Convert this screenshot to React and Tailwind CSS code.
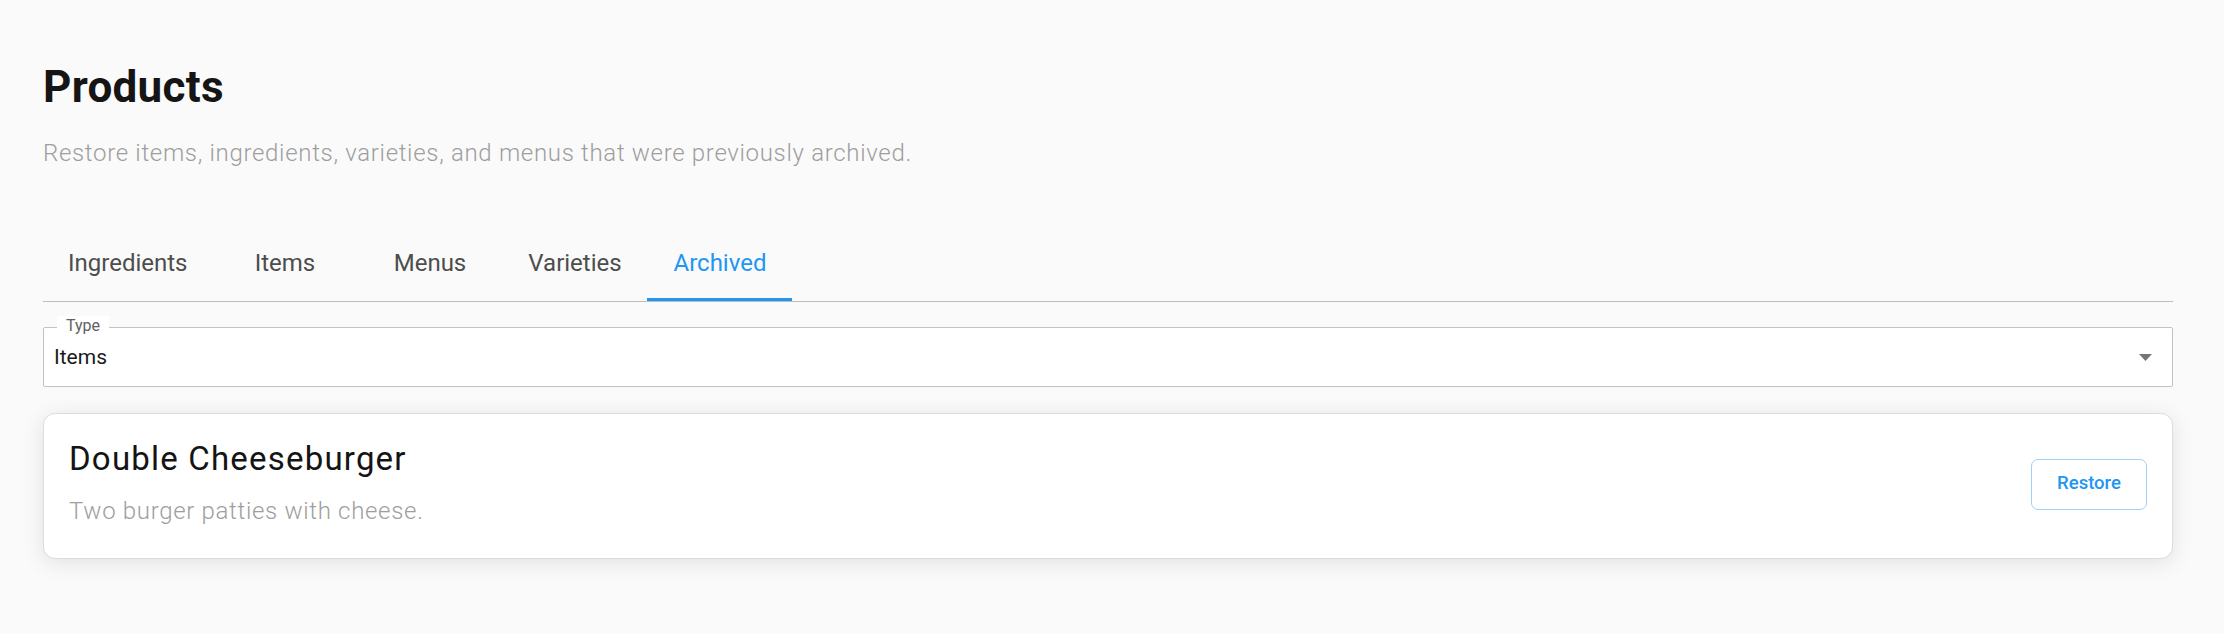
export default function App() {
  const tabs = [
    { label: "Ingredients", active: false },
    { label: "Items", active: false },
    { label: "Menus", active: false },
    { label: "Varieties", active: false },
    { label: "Archived", active: true },
  ];
  return (
    <div
      className="min-h-[634px] w-full bg-[#fafafa] pl-[43px] pr-[51px] pt-[61px]"
      style={{ fontFamily: "Roboto, 'Liberation Sans', sans-serif" }}
    >
      <h1 className="text-[44px] leading-[52px] font-bold tracking-[0.3px] text-[#151515]">Products</h1>
      <p className="mt-[22px] text-[24px] leading-[36px] font-light tracking-[0.68px] text-[#9e9e9e]">
        Restore items, ingredients, varieties, and menus that were previously archived.
      </p>

      <div className="mt-[58px] flex h-[73px] border-b border-[#bdbdbd]">
        {tabs.map((t) => (
          <div
            key={t.label}
            className={
              "relative flex min-w-[145px] items-center justify-center px-[25px] text-[24px] leading-[30px] " +
              (t.active ? "text-[#2196f3]" : "text-[#4d4d4d]")
            }
          >
            <span className="-mt-[4px]">{t.label}</span>
            {t.active && (
              <span className="absolute bottom-0 left-0 right-0 h-[3px] bg-[#2196f3]" />
            )}
          </div>
        ))}
      </div>

      <div className="relative mt-[25px] flex h-[60px] items-center justify-between rounded-[2px] border-[1.5px] border-[#c2c2c2] bg-white pl-[10px] pr-[20px]">
        <span className="absolute -top-[12px] left-[13px] bg-white px-[9px] text-[16px] leading-[20px] text-[#616161]">
          Type
        </span>
        <span className="text-[21px] leading-[28px] text-[#1a1a1a]">Items</span>
        <svg width="13" height="7" viewBox="0 0 13 7" className="mt-[1px]">
          <path d="M0 0 L13 0 L6.5 7 Z" fill="#757575" />
        </svg>
      </div>

      <div className="mt-[26px] flex items-center justify-between rounded-[12px] border border-[#dcdcdc] bg-white pb-[29px] pl-[25px] pr-[25px] pt-[25px] shadow-[0_4px_22px_rgba(0,0,0,0.10)]">
        <div className="flex flex-col">
          <h2 className="text-[33px] leading-[40px] font-normal tracking-[1.2px] text-[#141414]">Double Cheeseburger</h2>
          <p className="mt-[14px] text-[24px] leading-[36px] font-light tracking-[0.68px] text-[#9e9e9e]">
            Two burger patties with cheese.
          </p>
        </div>
        <button className="flex h-[51px] w-[116px] items-center justify-center rounded-[7px] border-[1.5px] border-[#9fd0fa] text-[18.5px] font-medium text-[#2196f3]">
          Restore
        </button>
      </div>
    </div>
  );
}
